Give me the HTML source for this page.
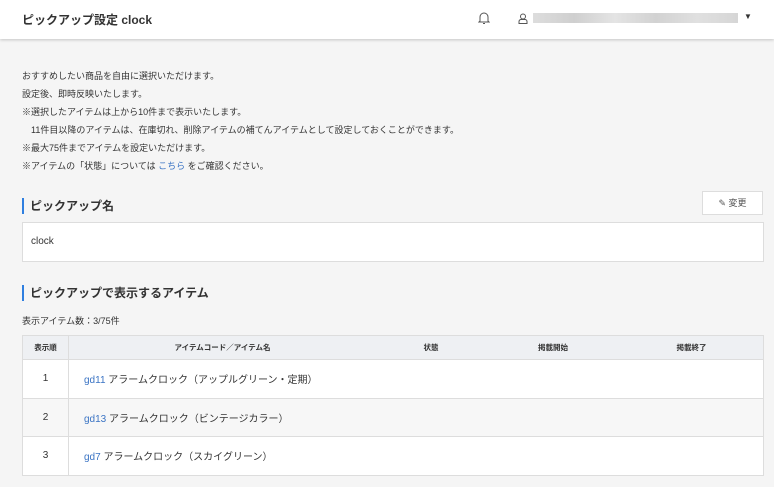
<!DOCTYPE html>
<html><head><meta charset="utf-8"><style>
body{margin:0;width:774px;height:487px;background:#f5f5f5;font-family:"Liberation Sans","Noto Sans CJK JP",sans-serif;color:#333;overflow:hidden;position:relative}
.hd{position:absolute;left:0;top:0;width:774px;height:39px;background:#fff;box-shadow:0 1px 3px rgba(0,0,0,.2)}
.t{position:absolute;font-size:9px;white-space:nowrap}
.h2{position:absolute;left:22px;border-left:2px solid #2f7fe0;padding-left:6px;font-size:12px;font-weight:bold;height:16px;line-height:16px}
a{color:#3b74c4;text-decoration:none}
table{position:absolute;left:22px;top:335px;width:742px;border-collapse:collapse;font-size:10px;background:#fff}
td,th{border:1px solid #ddd;padding:0}
th{background:#eef0f3;height:23px;font-size:7.5px;border-left:none;border-right:none}
th.f{border-right:1px solid #ddd;border-left:1px solid #ddd}
th.l{border-right:1px solid #ddd}
td{height:37.5px}
tr.g td{background:#f7f7f7}
</style></head><body>
<div class="hd">
<div class="t" style="left:22px;top:11px;font-size:12px;font-weight:bold">ピックアップ設定 clock</div>
<svg style="position:absolute;left:478px;top:11px" width="12" height="14" viewBox="0 0 12 14"><path d="M2 10V6a4 4 0 0 1 8 0v4l1 1H1z M5 12.5h2" fill="none" stroke="#555" stroke-width="1"/></svg>
<svg style="position:absolute;left:518px;top:13px" width="10" height="11" viewBox="0 0 10 11"><circle cx="5" cy="3.5" r="2.5" fill="none" stroke="#555"/><path d="M1 10.5v-2a2 2 0 0 1 2-2h4a2 2 0 0 1 2 2v2z" fill="none" stroke="#555"/></svg>
<div style="position:absolute;left:533px;top:13px;width:205px;height:10px;background:linear-gradient(90deg,#ddd,#cfcfcf,#e4e4e4,#d2d2d2,#e0e0e0,#d6d6d6)"></div>
<div class="t" style="left:744px;top:12px;font-size:8px">▼</div>
</div>
<div class="t" style="left:22px;top:69px">おすすめしたい商品を自由に選択いただけます。</div>
<div class="t" style="left:22px;top:87px">設定後、即時反映いたします。</div>
<div class="t" style="left:22px;top:105px">※選択したアイテムは上から10件まで表示いたします。</div>
<div class="t" style="left:22px;top:123px">　11件目以降のアイテムは、在庫切れ、削除アイテムの補てんアイテムとして設定しておくことができます。</div>
<div class="t" style="left:22px;top:141px">※最大75件までアイテムを設定いただけます。</div>
<div class="t" style="left:22px;top:159px">※アイテムの「状態」については <a>こちら</a> をご確認ください。</div>
<div class="h2" style="top:198px">ピックアップ名</div>
<div style="position:absolute;left:702px;top:191px;width:59px;height:22px;background:#fff;border:1px solid #ddd;font-size:9px;line-height:22px;text-align:center;color:#555">✎ 変更</div>
<div style="position:absolute;left:22px;top:222px;height:40px;background:#fff;border:1px solid #ddd;font-size:10px;line-height:38px;padding-left:8px;box-sizing:border-box;width:742px">clock</div>
<div class="h2" style="top:285px">ピックアップで表示するアイテム</div>
<div class="t" style="left:22px;top:314px">表示アイテム数：3/75件</div>
<table>
<tr><th class="f" style="width:45px">表示順</th><th style="width:307px">アイテムコード／アイテム名</th><th style="width:110px">状態</th><th style="width:134px">掲載開始</th><th class="l">掲載終了</th></tr>
<tr><td align="center">1</td><td colspan="4" style="padding-left:15px"><a>gd11</a> アラームクロック（アップルグリーン・定期）</td></tr>
<tr class="g"><td align="center">2</td><td colspan="4" style="padding-left:15px"><a>gd13</a> アラームクロック（ビンテージカラー）</td></tr>
<tr><td align="center">3</td><td colspan="4" style="padding-left:15px"><a>gd7</a> アラームクロック（スカイグリーン）</td></tr>
</table>
</body></html>
